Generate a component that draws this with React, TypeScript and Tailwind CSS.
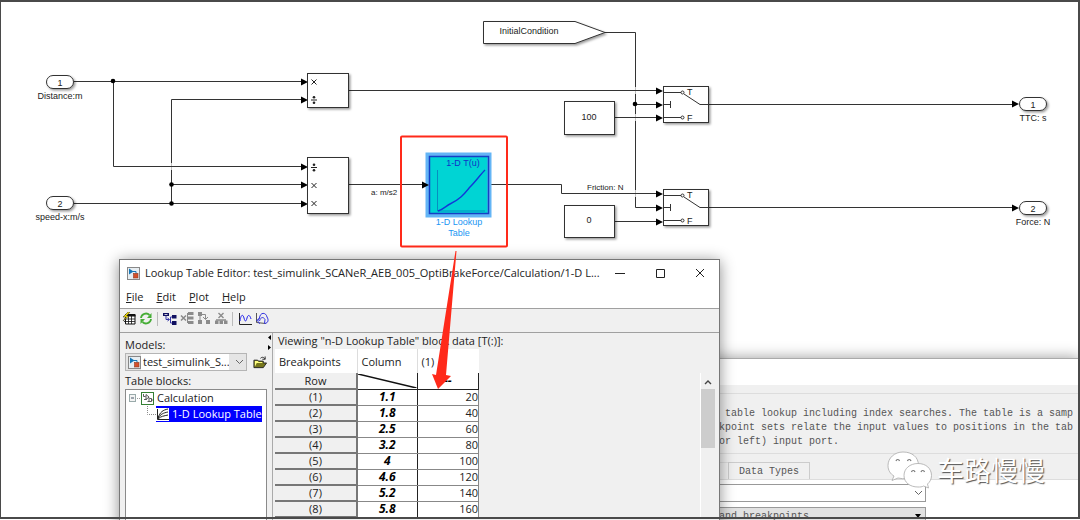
import { useState } from 'react'

const wires = [
  'M74 81.5H303',
  'M113.5 81.5V166.5H303',
  'M74 203.5H303',
  'M171.5 203.5V99.5H303',
  'M171.5 184.5H303',
  'M349 90.5H657',
  'M349 184.5H424',
  'M488 184.5H561.5V193.5H657',
  'M605 32.5H635.5V207.5H657',
  'M635.5 104.5H657',
  'M614 117.5H657',
  'M614 221.5H657',
  'M709 104.5H1012',
  'M709 207.5H1012',
]

const arrows = [
  [308, 82], [308, 100], [308, 167], [308, 185], [308, 204],
  [663, 91], [663, 105], [663, 118], [663, 194], [663, 208], [663, 222],
  [1019, 104], [1019, 208],
]

const junctions = [[113, 81], [171.5, 184.5], [171.5, 203.5], [635, 104]]

const rows = [
  ['1.1', 20],
  ['1.8', 40],
  ['2.5', 60],
  ['3.2', 80],
  ['4', 100],
  ['4.6', 120],
  ['5.2', 140],
  ['5.8', 160],
]

function Port({ x, y, num, label }: { x: number; y: number; num: string; label: string }) {
  return (
    <g>
      <rect x={x - 13.5} y={y - 6.5} width={27} height={13} rx={6.5} fill="#fff" stroke="#333" filter="url(#shadow)" />
      <text x={x} y={y + 3.5} textAnchor="middle">{num}</text>
      <text x={x} y={y + 17} textAnchor="middle">{label}</text>
    </g>
  )
}

function Block({ x, y, w, h }: { x: number; y: number; w: number; h: number }) {
  return <rect x={x} y={y} width={w} height={h} fill="#fff" stroke="#333" filter="url(#shadow)" />
}

function Times({ x, y }: { x: number; y: number }) {
  return <path d={`M${x - 2.5} ${y - 2.5}l5 5m0-5l-5 5`} stroke="#222" fill="none" />
}

function Divide({ x, y }: { x: number; y: number }) {
  return (
    <g>
      <path d={`M${x - 3} ${y}h6`} stroke="#222" />
      <circle cx={x} cy={y - 2.7} r={1.3} />
      <circle cx={x} cy={y + 2.7} r={1.3} />
    </g>
  )
}

function Switch({ y }: { y: number }) {
  return (
    <g>
      <Block x={663.5} y={y + 0.5} w={45} h={36} />
      <g stroke="#333" fill="none">
        <path d={`M664 ${y + 6.5}h17M664 ${y + 18.5}h6M670.5 ${y + 15}v7M664 ${y + 31.5}h17M684 ${y + 8}l16 10.5h9`} />
        <circle cx={682.5} cy={y + 6.5} r={1.5} />
        <circle cx={682.5} cy={y + 31.5} r={1.5} />
      </g>
      <text x={687} y={y + 8.5}>T</text>
      <text x={687} y={y + 34.5}>F</text>
    </g>
  )
}

function Diagram() {
  return (
    <svg
      className="absolute left-0 top-0"
      width="1080"
      height="258"
      fill="#222"
      fontFamily="'Liberation Sans', Arial, sans-serif"
      fontSize="9"
    >
      <defs>
        <filter id="shadow" x="-20%" y="-20%" width="150%" height="150%">
          <feDropShadow dx="1.5" dy="1.5" stdDeviation="1" floodColor="#000" floodOpacity="0.4" />
        </filter>
      </defs>
      <g stroke="#333" fill="none">
        {wires.map((d) => <path key={d} d={d} />)}
      </g>
      {/* gaps where two signals cross */}
      <path
        d="M171.5 163v3M171.5 167v3M635.5 87v3M635.5 91v3M635.5 114v3M635.5 118v3M635.5 190v3M635.5 194v3"
        stroke="#fff"
        strokeOpacity=".7"
      />
      {arrows.map(([x, y]) => <path key={`${x}-${y}`} d={`M${x} ${y}l-7-3.5v7z`} fill="#000" />)}
      {junctions.map(([x, y]) => <circle key={`${x}-${y}`} cx={x} cy={y} r={2.3} fill="#000" />)}

      <Port x={60} y={82} num="1" label="Distance:m" />
      <Port x={60} y={203} num="2" label="speed-x:m/s" />
      <Port x={1033} y={104} num="1" label="TTC: s" />
      <Port x={1033} y={208} num="2" label="Force: N" />

      <Block x={307.5} y={73.5} w={41} h={34} />
      <Times x={314} y={82} />
      <Divide x={314} y={100} />
      <Block x={307.5} y={157.5} w={41} h={56} />
      <Divide x={314} y={167.5} />
      <Times x={314} y={185.5} />
      <Times x={314} y={203.5} />

      <path d="M483.5 21.5H575L605 32.5L575 43.5H483.5z" fill="#fff" stroke="#333" filter="url(#shadow)" />
      <text x="529" y="34" textAnchor="middle">InitialCondition</text>
      <Block x={564.5} y={101.5} w={50} h={33} />
      <text x="589" y="120" textAnchor="middle">100</text>
      <Block x={564.5} y={205.5} w={50} h={32} />
      <text x="589" y="223" textAnchor="middle">0</text>
      <Switch y={86} />
      <Switch y={189} />
      <text x="371" y="195" fontSize="8">a: m/s2</text>
      <text x="587" y="190" fontSize="8">Friction: N</text>

      <rect x="427.5" y="154.5" width="62" height="61" fill="#00d4d4" stroke="#64b5f6" strokeWidth="4" />
      <rect x="429.5" y="156.5" width="59" height="57" fill="none" stroke="#173fc4" strokeWidth="1.5" />
      <path d="M429 185l-7-3.5v7z" fill="#000" />
      <text x="463" y="166" textAnchor="middle" fill="#1230c8">1-D T(u)</text>
      <path d="M437.5 170v41H485" fill="none" stroke="#078fc0" />
      <path d="M438 211C444 209 446 206 450 204C461 199 465 193 470 187C476 181 480 175 485 170" fill="none" stroke="#1238d8" strokeWidth="1.4" />
      <g fill="#2196f3" textAnchor="middle">
        <text x="459" y="225">1-D Lookup</text>
        <text x="459" y="236">Table</text>
      </g>
      <rect x="401" y="136.5" width="106" height="110" rx="1" fill="none" stroke="#ff2a1a" strokeWidth="2" />
    </svg>
  )
}

function ModelIcon() {
  return (
    <svg className="shrink-0" width="13" height="13" viewBox="0 0 13 13">
      <rect x=".5" y=".5" width="12" height="12" fill="#e8eef2" stroke="#888" />
      <path d="M2 1.5l4.5 3L2 7.5z" fill="#1477b8" />
      <path d="M6 4.5h3V7" fill="none" stroke="#1477b8" />
      <rect x="6.5" y="6.5" width="4.5" height="4.5" fill="#d4502b" stroke="#91391f" strokeWidth=".6" />
    </svg>
  )
}

function Chevron() {
  return (
    <svg width="9" height="6" viewBox="0 0 9 6">
      <path d="M1 1l3.500 3.500L8 1" fill="none" stroke="#666" />
    </svg>
  )
}

const tools = [
  {
    label: 'Edit table',
    art: (
      <>
        <path d="M3.5 2.5H13V12H3.5z" fill="#fff" stroke="#111" />
        <path d="M3 3.5h10.5" stroke="#111" strokeWidth="2" />
        <path d="M2 7h11M2 9.5h11M6.500 4v8M9.500 4v8" stroke="#111" strokeWidth=".8" />
        <path d="M6 0L1 5h3L1 9l6-5H4.500L8 0z" fill="#ffe600" stroke="#222" strokeWidth=".5" />
      </>
    ),
  },
  {
    label: 'Refresh',
    art: (
      <>
        <path d="M2 6a5 5 0 0 1 8.500-3M12 7a5 5 0 0 1-8.500 3" fill="none" stroke="#45ad35" strokeWidth="1.8" />
        <path d="M12.500 1v5H8zM1.500 12v-5H6z" fill="#45ad35" />
      </>
    ),
  },
  {
    label: 'Insert row',
    art: (
      <>
        <path d="M0 0h6v3H0zM9 2h4.500v3.500H9zM9 8h4.500v4H9z" fill="#101060" />
        <path d="M1.500 1.500h3" stroke="#fff" strokeWidth=".8" />
        <path d="M3 3v3.500h3M4.500 5l2 1.500-2 1.500M9 4H7.500v6H9" fill="none" stroke="#3434a8" />
      </>
    ),
  },
  {
    label: 'Delete row',
    art: (
      <>
        <path d="M1 3.500l5 5M6 3.500l-5 5" stroke="#888" strokeWidth="1.500" />
        <path d="M8 0h5.500v3H8zM8 4.500h5.500v3H8zM8 9h5.500v3H8z" fill="#8b8b8b" />
        <path d="M7.500 1v10" stroke="#8b8b8b" />
      </>
    ),
  },
  {
    label: 'Insert column',
    art: (
      <>
        <path d="M1 0h4v4H1zM1 8h4v4H1zM9 8h4v4H9z" fill="#8b8b8b" />
        <path d="M3 4v4M5 2.500h3.500V7M6 5l2.500 2.500L11 5" fill="none" stroke="#8b8b8b" />
      </>
    ),
  },
  {
    label: 'Delete column',
    art: (
      <>
        <path d="M1 8.500h3.500V12H1zM5.500 8.500H9V12H5.500zM10 8.500h3.500V12H10z" fill="#8b8b8b" />
        <path d="M4.500 1l5 5M9.500 1l-5 5M2 8h10" stroke="#8b8b8b" strokeWidth="1.400" />
      </>
    ),
  },
  {
    label: 'Line plot',
    art: (
      <>
        <path d="M1.500 0v11.500H14" fill="none" stroke="#222" />
        <path d="M2 8C3 1 5 1 6 5s2 4 3 0 3-3 4 1" fill="none" stroke="#2222ee" />
      </>
    ),
  },
  {
    label: 'Surface plot',
    art: (
      <>
        <path d="M1.500 1v9.500l9 1" fill="none" stroke="#555" />
        <path
          d="M1.500 9l3-3C5 0 11 0 12 5c2 3 1 6-2 6.500M4.500 9c1-4 4-4.500 5.500-1.500M5 11.500c-3-1-2.500-5 0-5.500M9.500 11.500l.500-4"
          fill="none"
          stroke="#3030e0"
        />
      </>
    ),
  },
]

function Toolbar() {
  return (
    <div className="flex h-[25px] shrink-0 items-start border-y border-[#a0a0a0] bg-[#f0f0f0] pt-[3px]">
      {tools.map((tool, i) => (
        <div key={tool.label} className="flex items-center">
          {(i === 2 || i === 6) && <span className="mx-[3px] h-3.5 w-px bg-[#bbb]" />}
          <button className="flex w-[17px] justify-center" title={tool.label}>
            <svg width="14" height="13" viewBox="0 0 14 13">{tool.art}</svg>
          </button>
        </div>
      ))}
    </div>
  )
}

function Sidebar() {
  return (
    <div className="flex w-[149px] shrink-0 flex-col pl-[5px] pr-0.5 pt-1">
      <label htmlFor="model" className="leading-4">Models:</label>
      <div className="flex items-center gap-1.5">
        <div className="flex h-[18px] w-[122px] items-center border border-[#b5b5b5] bg-[#e5e5e5] pl-0.5">
          <ModelIcon />
          <select id="model" className="mr-1.5 h-4 w-[88px] appearance-none bg-white pl-0.5 outline-none">
            <option>test_simulink_S...</option>
          </select>
          <Chevron />
        </div>
        <button title="Open model">
          <svg className="block" width="14" height="13" viewBox="0 0 15 13">
            <path d="M1 12V4h4l1 1h5v2h3.500L11 12z" fill="#77771c" stroke="#222" />
            <path d="M2 11V5h3l1 1h4v1H4z" fill="#ffff80" />
            <path d="M8 2c2-2 4-1 5 1m0-3v3h-3" fill="none" stroke="#222" />
          </svg>
        </button>
      </div>
      <div className="mt-0.5 leading-4">Table blocks:</div>
      <div className="flex-1 border border-[#8a8a8a] bg-white pl-[3px]">
        <div className="flex h-4 items-center">
          <svg width="12" height="16" viewBox="0 0 12 16">
            <rect x=".5" y="4.500" width="6" height="7" fill="#f4f4f4" stroke="#9aa" />
            <path d="M2 8h3" stroke="#456" />
            <path d="M8 8.500h4" stroke="#999" strokeDasharray="1 1" />
          </svg>
          <svg width="13" height="13" viewBox="0 0 13 13">
            <rect x=".5" y=".5" width="12" height="12" fill="#fff" stroke="#348034" />
            <path d="M2.500 2v2.500h2M3 7.500h2.500M5 2.500l3 2.500-3 2.500zM8 5.500v3.500M6.500 9.500h4v-3h-2M10.500 8h2" fill="none" stroke="#333" strokeWidth=".8" />
          </svg>
          <span className="ml-[3px]">Calculation</span>
        </div>
        <div className="flex h-4 items-center pr-1">
          <svg className="shrink-0" width="27" height="16" viewBox="0 0 27 16">
            <path d="M18.500 0v8.500H27" fill="none" stroke="#888" strokeDasharray="1 1" />
          </svg>
          <div className="flex h-4 flex-1 items-center bg-[#00f] text-white">
            <svg className="shrink-0" width="13" height="13" viewBox="0 0 13 13">
              <path d="M0 0h13v13H0z" fill="#fff" />
              <path d="M1.500 1v10.500H13M2 10C4 4 7 2 12 1M2 10c3-4 5-5 10-6M2 11c3-3 6-3 10-4" fill="none" stroke="#222" />
            </svg>
            <span className="ml-[3px] whitespace-nowrap">1-D Lookup Table</span>
          </div>
        </div>
      </div>
    </div>
  )
}

function DataTable() {
  return (
    <table className="w-[204px] table-fixed border-collapse bg-white">
      <thead>
        <tr className="h-6 text-left">
          <th className="w-[82px] border-r border-[#ddd] pl-1 pt-0.5 font-normal">Breakpoints</th>
          <th className="w-[60px] border-r border-[#ddd] pl-1 pt-0.5 font-normal">Column</th>
          <th className="pl-1 pt-0.5 font-normal">(1)</th>
        </tr>
      </thead>
      <tbody className="leading-[14px]">
        <tr className="h-4">
          <td className="border-b-2 border-r-2 border-[#777] bg-[#f0f0f0] p-0 text-center">Row</td>
          <td className="border-b border-r border-[#222] p-0">
            <svg className="block h-[14px] w-full" viewBox="0 0 60 14" preserveAspectRatio="none">
              <path d="M0 0l60 14" stroke="#111" strokeWidth="1.500" />
            </svg>
          </td>
          <td className="border-b border-r border-[#222] p-0 text-center text-xs/[14px] font-bold italic text-black">--</td>
        </tr>
        {rows.map(([bp, value], i) => (
          <tr key={bp} className="h-4">
            <td className="border-b-2 border-r-2 border-[#777] bg-[#f0f0f0] p-0 text-center">({i + 1})</td>
            <td className="border-b border-r border-b-[#888] border-r-[#222] p-0 text-center text-xs/[14px] font-bold italic text-black">{bp}</td>
            <td className="border-b border-r border-[#888] p-0 text-right">{value}</td>
          </tr>
        ))}
      </tbody>
    </table>
  )
}

function LookupEditor() {
  return (
    <div className="absolute left-[119px] top-[259px] flex h-[270px] w-[601px] flex-col border border-[#777] bg-[#f0f0f0] font-['Open_Sans','Noto_Sans_CJK_SC',sans-serif] text-[11px] shadow-[0_2px_14px_rgba(0,0,0,0.45)]">
      <div className="flex h-[26px] shrink-0 items-center bg-white pl-[7px] pr-1.5">
        <ModelIcon />
        <span className="ml-[5px] whitespace-nowrap">
          Lookup Table Editor: test_simulink_SCANeR_AEB_005_OptiBrakeForce/Calculation/1-D L...
        </span>
        <div className="ml-auto flex">
          <button className="flex w-10 justify-center" title="Minimize">
            <svg width="10" height="10"><path d="M0 5.500h10" stroke="#222" /></svg>
          </button>
          <button className="flex w-10 justify-center" title="Maximize">
            <svg width="10" height="10"><path d="M1.500 1.500h8v8h-8z" fill="none" stroke="#222" /></svg>
          </button>
          <button className="flex w-10 justify-center" title="Close">
            <svg width="10" height="10"><path d="M1 1l8 8M9 1l-8 8" stroke="#222" /></svg>
          </button>
        </div>
      </div>
      <div className="flex h-[22px] shrink-0 items-center gap-[13px] bg-white pl-1.5">
        {['File', 'Edit', 'Plot', 'Help'].map((item) => (
          <button key={item}><u>{item[0]}</u>{item.slice(1)}</button>
        ))}
      </div>
      <Toolbar />
      <div className="flex min-h-0 flex-1">
        <Sidebar />
        <div className="relative w-1 shrink-0 border-r border-[#aaa]">
          <svg className="absolute -left-0.5 top-0.5" width="4" height="16">
            <path d="M4 0v5L1 2.500zM1 10v5l3-2.500z" fill="#000" />
          </svg>
        </div>
        <div className="min-w-0 flex-1 pl-0.5">
          <div className="h-4 pl-[3px] leading-4">Viewing "n-D Lookup Table" block data [T(:)]:</div>
          <div className="flex justify-between">
            <DataTable />
            <div className="mr-1 mt-6 flex w-[15px] flex-col items-center border-l border-white">
              <svg className="mb-1 mt-1.5" width="8" height="6"><path d="M1 5l3-3 3 3" fill="none" stroke="#444" strokeWidth="1.400" /></svg>
              <div className="h-[59px] w-full bg-[#cdcdcd]" />
            </div>
          </div>
        </div>
      </div>
    </div>
  )
}

function BlockParameters() {
  const [method, setMethod] = useState('table')

  return (
    <div className="absolute left-[600px] right-0 top-[358px] h-[170px] overflow-hidden border-t border-[#aaa] bg-white font-['Liberation_Mono','Noto_Sans_Mono_CJK_SC',monospace] text-[10px] text-[#555] shadow-[0_0_14px_rgba(0,0,0,0.4)]">
      <div className="mt-[26px] border-b border-[#ddd] bg-[#f0f0f0] pt-2">
        <div className="border-y border-[#ddd] pb-1 pl-[119px] pt-[13px]">
          <pre className="font-[inherit] leading-[14px]">{` table lookup including index searches. The table is a samp
kpoint sets relate the input values to positions in the tab
or left) input port.`}</pre>
        </div>
        <div className="mt-2 flex pl-[110px]">
          <div className="w-[18px] border-t border-[#ddd]" />
          <button className="h-[17px] w-[82px] border border-b-0 border-[#ccc]">Data Types</button>
        </div>
      </div>
      <div className="mt-1 flex h-[18px] w-[326px] items-center border border-[#999] pr-0.5">
        <select aria-label="Specification" className="h-full flex-1 appearance-none bg-white outline-none" />
        <Chevron />
      </div>
      <div className="mt-[5px] flex h-[18px] w-[326px] items-center border border-[#999] bg-[#e1e1e1] pr-1">
        <select
          aria-label="Data source"
          value={method}
          onChange={(e) => setMethod(e.target.value)}
          className="h-full flex-1 appearance-none pl-[118px] outline-none"
        >
          <option value="table">and breakpoints</option>
        </select>
        <svg width="6" height="4"><path d="M0 0h6L3 4z" fill="#000" /></svg>
      </div>
    </div>
  )
}

function Watermark() {
  return (
    <div className="absolute left-[887px] top-[451px] flex items-center gap-1">
      <svg width="46" height="38" viewBox="0 0 46 38" fill="#fff" stroke="#aaa" strokeWidth=".8">
        <path d="M16 1C7.500 1 1 7 1 14.500c0 5 2.500 8.500 6 10.500l-2 4.500 6-2.500c13 3 20.500-4 20.500-12.500S25 1 16 1z" />
        <path d="M31 12.500c-8 0-14 5-14 12s6 11.500 14 11.500c2 0 4 0 5.500-1l5 2-1-4c2.500-2 4-5 4-8.500 0-7-5.500-12-13.500-12z" />
        <path d="M9 10c.5-2 3-2 3.500 0M20.500 10c.5-2 3-2 3.500 0M24.500 21c.5-2 3-2 3.500 0M34 21c.5-2 3-2 3.500 0" fill="none" stroke="#777" strokeWidth="1.200" />
      </svg>
      <span className="font-['Noto_Sans_CJK_SC',sans-serif] text-[27px] leading-9 text-white [text-shadow:1px_1px_1px_#555]">车路慢慢</span>
    </div>
  )
}

export default function App() {
  return (
    <main className="relative h-screen w-full overflow-hidden bg-white text-[#222]">
      <Diagram />
      <BlockParameters />
      <LookupEditor />
      <svg className="pointer-events-none absolute left-[430px] top-[250px]" width="30" height="140">
        <path d="M26.5 1L16 125l5 1L8 139 2 124l4 1L25.5 1z" fill="#ff2a1a" />
      </svg>
      <Watermark />
      <div className="pointer-events-none absolute inset-x-0 bottom-px top-0 border-2 border-l border-[#4a4a4a]" />
    </main>
  )
}
